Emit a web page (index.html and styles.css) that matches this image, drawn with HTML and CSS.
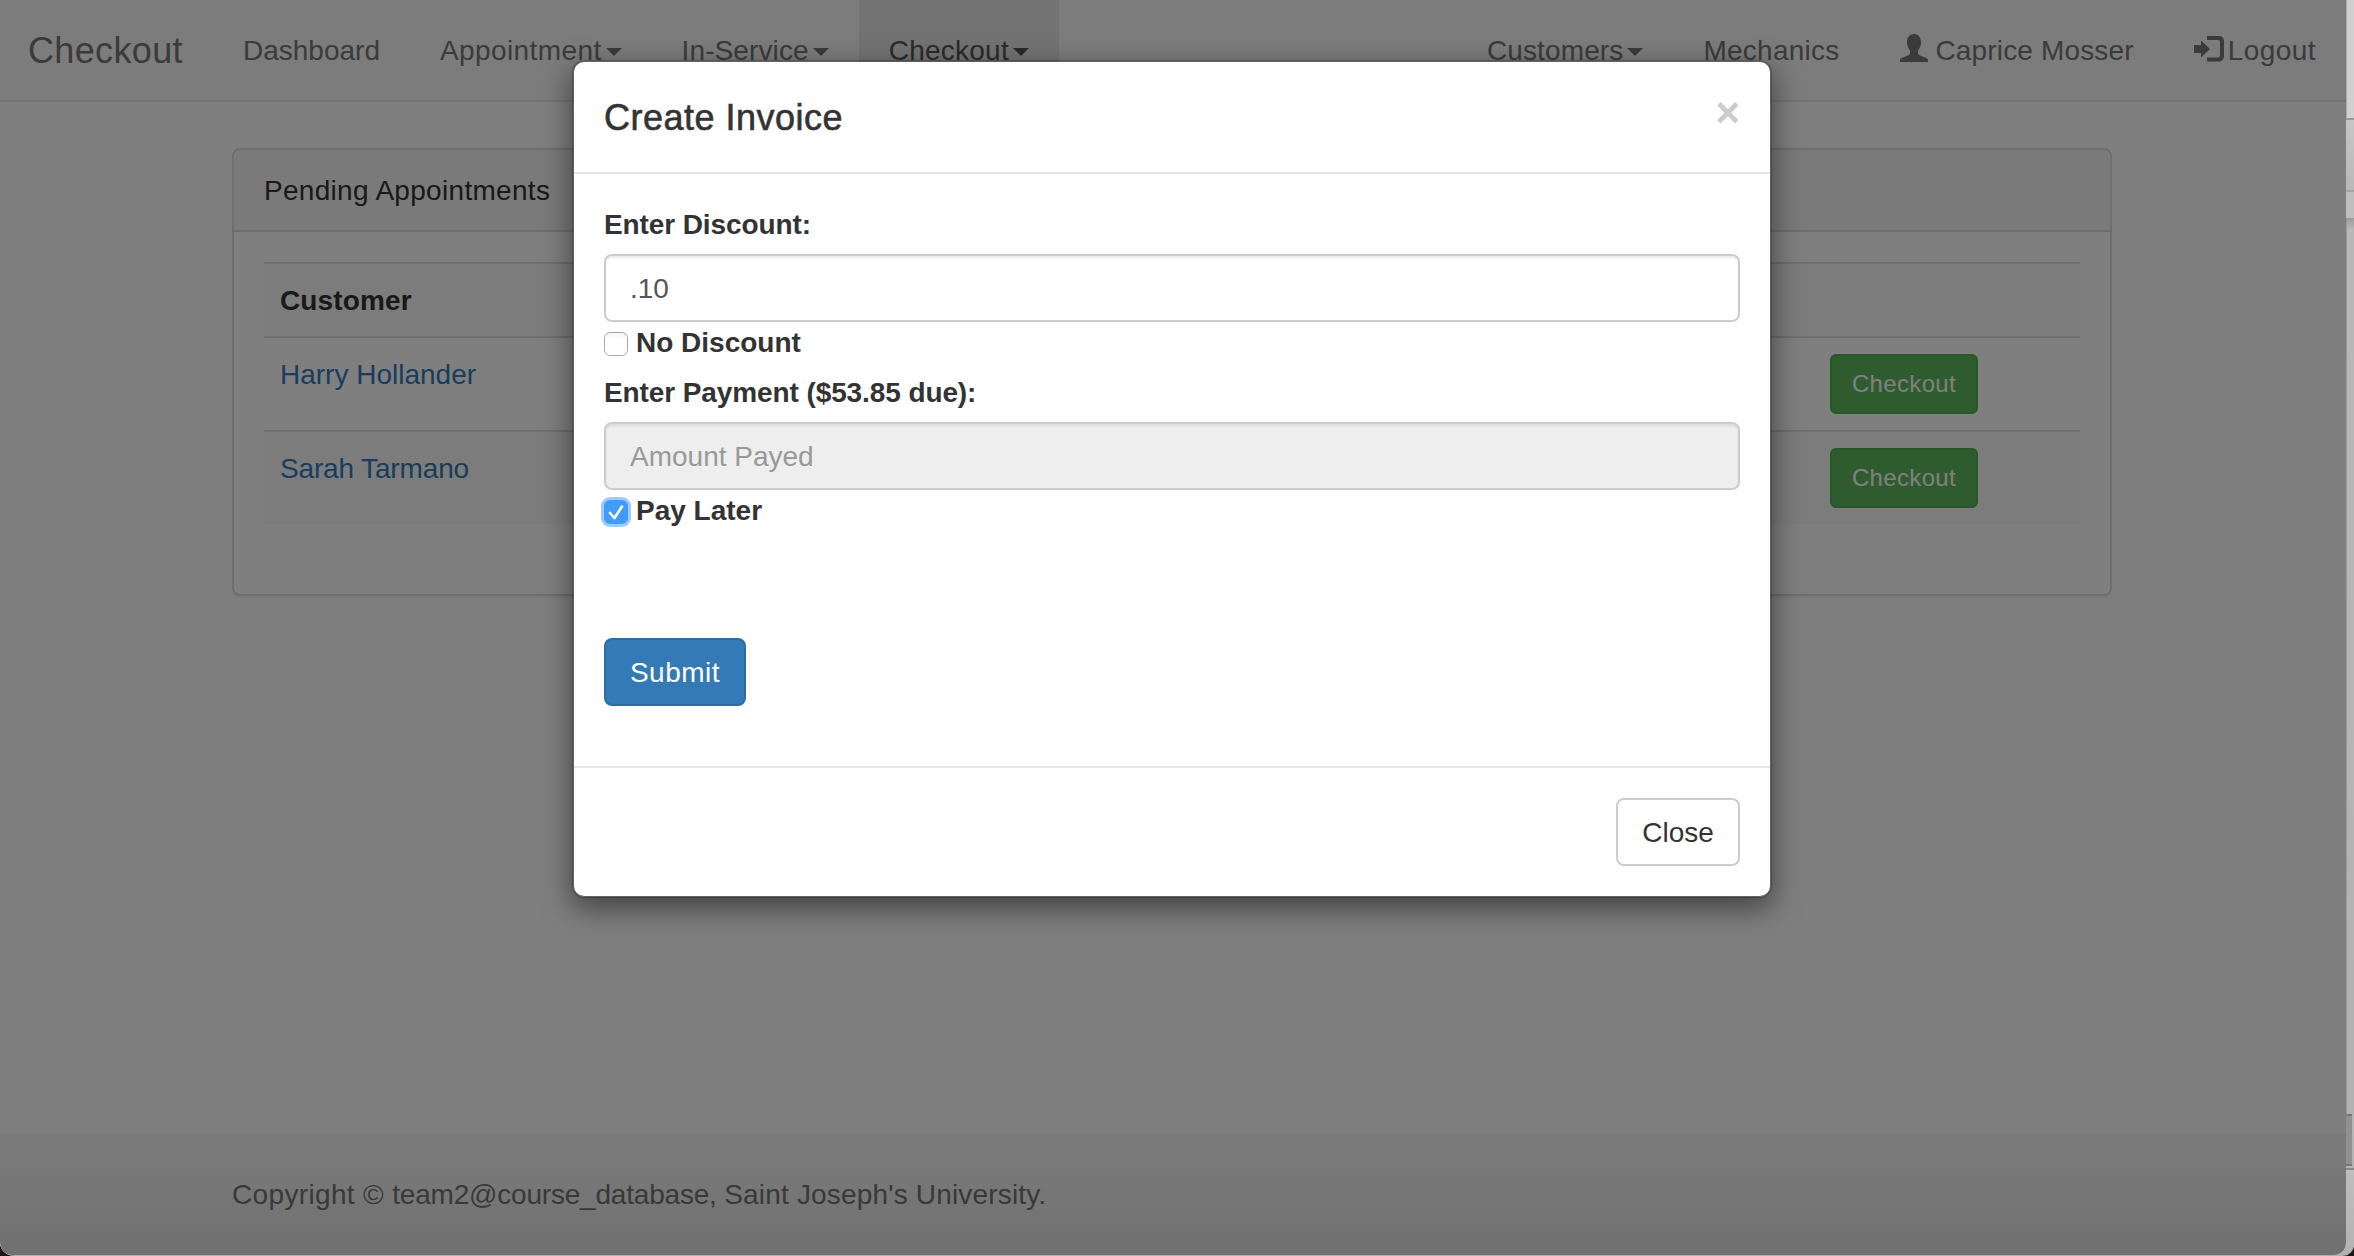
FILE: index.html
```html
<!DOCTYPE html>
<html lang="en">
<head>
<meta charset="utf-8">
<title>Checkout</title>
<link rel="stylesheet" href="styles.css">
</head>
<body>
<div class="desktop">
<div class="window">
  <nav class="navbar">
    <a class="brand">Checkout</a>
    <a class="nav-item">Dashboard</a>
    <a class="nav-item appt">Appointment<i class="caret"></i></a>
    <a class="nav-item serv">In-Service<i class="caret"></i></a>
    <a class="nav-item active">Checkout <i class="caret"></i></a>
    <span class="spacer"></span>
    <a class="nav-item cust">Customers<i class="caret"></i></a>
    <a class="nav-item mech">Mechanics</a>
    <a class="nav-item user"><svg class="icon" viewBox="0 0 28 28"><path d="M14 0C9.500 0 7 3.500 7 8.500C7 12 8.500 14.500 10 16.500V19C10 20.500 8.500 21.200 6.500 22C3.500 23.200 0 24.300 0 26V28H28V26C28 24.300 24.500 23.200 21.500 22C19.500 21.200 18 20.500 18 19V16.500C19.500 14.500 21 12 21 8.500C21 3.500 18.500 0 14 0Z"/></svg>Caprice Mosser</a>
    <a class="nav-item logout"><svg class="icon out" viewBox="0 0 32 28"><path d="M0 10H7V5.500L16 14L7 22.500V18H0Z"/><path d="M13 1H25C28 1 30 3 30 6V21C30 24 28 26.500 25 26.500H13V22.500H24Q26 22.500 26 20.500V7Q26 5 24 5H13Z"/></svg>Logout</a>
  </nav>
  <main class="container">
    <section class="panel">
      <header class="panel-heading">Pending Appointments</header>
      <div class="panel-body">
        <table class="table">
          <thead><tr class="odd"><th>Customer</th><th class="action"></th></tr></thead>
          <tbody>
            <tr><td><a class="link">Harry Hollander</a></td><td class="action"><button class="btn-sm">Checkout</button></td></tr>
            <tr class="odd"><td><a class="link tight">Sarah Tarmano</a></td><td class="action"><button class="btn-sm">Checkout</button></td></tr>
          </tbody>
        </table>
      </div>
    </section>
  </main>
  <footer class="footer"><p class="copyright"><span class="mark">Copyright © </span><span class="team">team2@course_database, </span><span class="school">Saint Joseph's University.</span></p></footer>
  <div class="backdrop">
    <div class="modal">
      <header class="modal-header"><h4 class="modal-title">Create Invoice</h4><button class="close">×</button></header>
      <form class="modal-body">
        <label class="field-label">Enter Discount:</label>
        <input class="control" type="text" value=".10">
        <label class="check"><span class="box"></span>No Discount</label>
        <label class="field-label">Enter Payment ($53.85 due):</label>
        <input class="control" type="text" placeholder="Amount Payed" disabled>
        <label class="check later"><span class="box checked"><svg class="tick" viewBox="0 0 24 24"><path d="M6 13L10.500 18L18 6.500"/></svg></span>Pay Later</label>
        <button class="btn primary" type="button">Submit</button>
      </form>
      <footer class="modal-footer"><button class="btn default">Close</button></footer>
    </div>
  </div>
</div>
<aside class="behind"><span class="b1"></span><span class="b2"></span><span class="b3"></span><span class="b4"></span><span class="b5"></span><span class="b6"></span></aside>
</div>
</body>
</html>
```
FILE: styles.css
```css
* { box-sizing: border-box; }
body { margin: 0; background: #1c1819; font: 28px/41px "Liberation Sans", Arial, sans-serif; color: #333; }
button, input { font: inherit; margin: 0; }
.desktop { display: flex; height: 1256px; overflow: hidden; background: linear-gradient(#d8d8d8, #b0b0b0); border-radius: 0 0 12px 14px; }
.window { position: relative; width: 2346px; height: 1255px; flex: none; display: flex; flex-direction: column; background: #fff; border-radius: 0 0 12px 12px; overflow: hidden; }
.navbar { display: flex; height: 102px; flex: none; background: #f8f8f8; border-bottom: 2px solid #e7e7e7; color: #777; white-space: nowrap; }
.brand { font-size: 36px; letter-spacing: .35px; padding: 30px 30px 30px 28px; width: 213px; }
.nav-item { padding: 30px; height: 100px; display: flex; }
.appt { letter-spacing: .4px; }
.serv { letter-spacing: .1px; }
.cust { letter-spacing: .12px; }
.mech { letter-spacing: .25px; }
.user { letter-spacing: .15px; }
.logout { letter-spacing: .45px; }
.active { background: #e7e7e7; color: #555; letter-spacing: .25px; }
.spacer { flex: 1; }
.caret { width: 0; height: 0; margin: 18px 0 0 4px; border: 8px solid transparent; border-top-color: currentColor; border-bottom: 0; }
.icon { width: 28px; height: 28px; margin: 4px 8px 0 0; fill: currentColor; }
.out { width: 32px; margin: 5px 2px 0 0; }
.container { width: 1880px; margin: 46px 0 0 232px; }
.panel { border: 2px solid #ddd; border-radius: 8px; box-shadow: 0 2px 2px rgba(0,0,0,.05); }
.panel-heading { height: 82px; padding: 20px 30px; letter-spacing: .3px; background: #f5f5f5; border-bottom: 2px solid #ddd; border-radius: 6px 6px 0 0; }
.panel-body { padding: 30px; }
.table { width: 100%; margin-bottom: 40px; border-collapse: separate; border-spacing: 0; table-layout: fixed; }
.table th, .table td { padding: 16px; text-align: left; vertical-align: top; border-top: 2px solid #ddd; }
.table th { padding-bottom: 15px; letter-spacing: .15px; }
.table .action { width: 266px; }
.odd { background: #f9f9f9; }
.link { color: #337ab7; }
.tight { letter-spacing: -.15px; }
.btn-sm { display: block; width: 148px; height: 60px; padding: 0; font-size: 24px; line-height: 36px; letter-spacing: .35px; color: #fff; background: #5cb85c; border: 2px solid #4cae4c; border-radius: 6px; }
.footer { margin-top: auto; height: 121px; flex: none; padding: 40px 232px; background: #f5f5f5; color: #777; }
.copyright { margin: 0; white-space: nowrap; }
.mark { letter-spacing: .35px; }
.team { letter-spacing: -.2px; }
.school { letter-spacing: .17px; }
.backdrop { position: absolute; inset: 0; background: linear-gradient(transparent 1150px, rgba(0,0,0,.08)), rgba(0,0,0,.5); }
.modal { width: 1200px; margin: 60px 0 0 572px; background: #fff; background-clip: padding-box; border: 2px solid rgba(0,0,0,.2); border-radius: 12px; box-shadow: 0 10px 30px rgba(0,0,0,.5); }
.modal-header { display: flex; justify-content: space-between; height: 112px; padding: 30px; border-bottom: 2px solid #e5e5e5; }
.modal-title { margin: 0; font-size: 36px; font-weight: 400; line-height: 51px; letter-spacing: .5px; -webkit-text-stroke: .6px #333; }
.close { height: 42px; padding: 0; border: 0; background: none; color: #ccc; font-size: 42px; font-weight: 700; line-height: 42px; }
.modal-body { height: 592px; padding: 30px; display: flex; flex-direction: column; align-items: flex-start; }
.field-label, .check { font-weight: 700; white-space: nowrap; }
.field-label { margin-bottom: 9px; letter-spacing: -.1px; }
.control { width: 100%; height: 68px; padding: 13px 24px 11px; border: 2px solid #ccc; border-radius: 8px; color: #555; background: #fff; box-shadow: inset 0 2px 2px rgba(0,0,0,.075); }
.control:disabled { background: #eee; }
.control::placeholder { color: #999; opacity: 1; }
.check { display: flex; margin-bottom: 10px; height: 40px; }
.box { width: 24px; height: 24px; margin: 10px 8px 0 0; border: 1.5px solid #aaa; border-radius: 6px; background: linear-gradient(#f6f6f6, #fff 25%); }
.checked { border: 0; background: #429cfb; box-shadow: 0 0 0 3px #9cccfd; }
.tick { display: block; width: 24px; height: 24px; fill: none; stroke: #fff; stroke-width: 2.6; stroke-linecap: round; stroke-linejoin: round; }
.later { margin-bottom: 108px; }
.btn { height: 68px; padding: 12px 0 11px; border: 2px solid #ccc; border-radius: 8px; background: #fff; color: #333; }
.primary { width: 142px; color: #fff; background: #337ab7; border-color: #2e6da4; letter-spacing: .5px; }
.modal-footer { display: flex; justify-content: flex-end; padding: 30px; height: 130px; border-top: 2px solid #e5e5e5; }
.default { width: 124px; }
.behind { width: 8px; display: flex; flex-direction: column; }
.b1 { height: 118px; background: #d0d0d0; border-left: 1px solid #aaa; }
.b2 { height: 72px; background: linear-gradient(#c6c6c6, #b8b8b8); border-top: 2px solid #999; }
.b3 { height: 28px; background: #bebebe; border-top: 2px solid #a4a4a4; }
.b4 { height: 896px; background: linear-gradient(#9c9c9c, #b8b8b8 12px, #b2b2b2); border-left: 1px solid #999; }
.b5 { width: 6px; height: 52px; background: #909090; border: solid #777; border-width: 2px 0; }
.b6 { margin-top: 2px; height: 88px; border-top: 2px solid #888; background: linear-gradient(#bebebe, #b2b2b2); }
```
